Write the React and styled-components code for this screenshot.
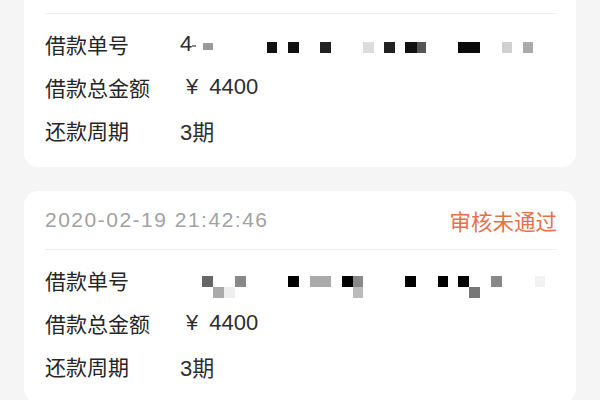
import styled, { createGlobalStyle } from "styled-components";

const GlobalStyle = createGlobalStyle`
  html, body {
    margin: 0;
    padding: 0;
    background: #f5f5f5;
  }
  body {
    font-family: "Liberation Sans", "Noto Sans CJK SC", sans-serif;
    overflow: hidden;
  }
`;

// mosaic cells of the masked loan number: [x, y, w, h, fill]
const firstMask = [
  [0, 23, 4, 2, "#888"],
  [11, 21, 10, 7, "#999"],
  [75, 20, 10, 11, "#111"],
  [96, 20, 11, 11, "#111"],
  [128, 20, 11, 11, "#222"],
  [171, 20, 11, 11, "#dcdcdc"],
  [192, 20, 11, 11, "#222"],
  [213, 20, 12, 11, "#111"],
  [225, 20, 9, 11, "#555"],
  [266, 20, 22, 11, "#0a0a0a"],
  [310, 20, 10, 11, "#d0d0d0"],
  [331, 20, 10, 11, "#aaa"],
];

const secondMask = [
  [22, 18, 11, 11, "#666"],
  [33, 29, 11, 11, "#aaa"],
  [44, 29, 11, 11, "#eee"],
  [55, 18, 11, 11, "#888"],
  [108, 18, 11, 11, "#000"],
  [130, 18, 21, 11, "#aaa"],
  [162, 18, 11, 11, "#000"],
  [173, 18, 10, 11, "#888"],
  [173, 29, 10, 11, "#bbb"],
  [225, 18, 11, 11, "#000"],
  [258, 18, 10, 11, "#000"],
  [278, 18, 11, 11, "#000"],
  [289, 29, 11, 11, "#777"],
  [311, 18, 11, 11, "#888"],
  [355, 18, 10, 11, "#f2f2f2"],
];

const orders = [
  {
    time: "",
    status: "",
    prefix: "4",
    mask: firstMask,
    amount: "¥ 4400",
    period: "3期",
  },
  {
    time: "2020-02-19 21:42:46",
    status: "审核未通过",
    prefix: "",
    mask: secondMask,
    amount: "¥ 4400",
    period: "3期",
  },
];

const Mosaic = ({ cells }) => (
  <svg width="380" height="43" viewBox="0 0 380 43">
    {cells.map(([x, y, w, h, fill], i) => (
      <rect key={i} x={x} y={y} width={w} height={h} fill={fill} />
    ))}
  </svg>
);

const App = () => {
  return (
    <>
      <GlobalStyle />
      <List>
        {orders.map((order, index) => (
          <Card key={index}>
            <Header>
              <Time>{order.time}</Time>
              <Status>{order.status}</Status>
            </Header>
            <Divider />
            <Body>
              <Row>
                <Label>借款单号</Label>
                <Value>
                  {order.prefix && <span>{order.prefix}</span>}
                  <Mosaic cells={order.mask} />
                </Value>
              </Row>
              <Row>
                <Label>借款总金额</Label>
                <Value $indent>{order.amount}</Value>
              </Row>
              <Row>
                <Label>还款周期</Label>
                <Value>{order.period}</Value>
              </Row>
            </Body>
          </Card>
        ))}
      </List>
    </>
  );
};

const List = styled.div`
  display: flex;
  flex-direction: column;
  gap: 24px;
  padding: 0 24px;
  margin-top: -45px;
`;

const Card = styled.div`
  background: #ffffff;
  border-radius: 14px;
  padding: 0 19px 0 21px;
`;

const Header = styled.div`
  height: 58px;
  display: flex;
  align-items: center;
  justify-content: space-between;
`;

const Time = styled.span`
  font-size: 21px;
  color: #a2a2a2;
  letter-spacing: 1.5px;
`;

const Status = styled.span`
  font-size: 21.5px;
  color: #e5714a;
`;

const Divider = styled.div`
  height: 1px;
  background: #efefef;
`;

const Body = styled.div`
  padding: 8px 0 16px;
`;

const Row = styled.div`
  height: 43px;
  display: flex;
  align-items: center;
`;

const Label = styled.span`
  width: 135px;
  flex-shrink: 0;
  font-size: 21px;
  color: #262626;
`;

const Value = styled.span`
  display: flex;
  align-items: center;
  font-size: 22px;
  color: #2e2e2e;
  word-spacing: 5px;
  padding-left: ${(p) => (p.$indent ? "6px" : "0")};
`;

export default App;
